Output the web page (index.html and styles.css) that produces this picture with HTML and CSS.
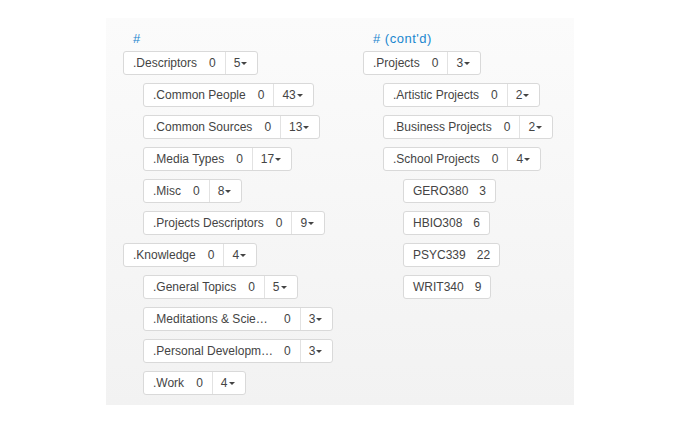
FILE: index.html
```html
<!DOCTYPE html>
<html>
<head>
<meta charset="utf-8">
<link rel="stylesheet" href="styles.css">
</head>
<body>
<div class="panel">
  <div class="col">
    <div class="head">#</div>
    <div class="row l0"><span class="btn"><span class="main"><span class="label">.Descriptors</span><span class="count">0</span></span><span class="more">5<i class="caret"></i></span></span></div>
    <div class="row l1"><span class="btn"><span class="main"><span class="label">.Common People</span><span class="count">0</span></span><span class="more">43<i class="caret"></i></span></span></div>
    <div class="row l1"><span class="btn"><span class="main"><span class="label">.Common Sources</span><span class="count">0</span></span><span class="more">13<i class="caret"></i></span></span></div>
    <div class="row l1"><span class="btn"><span class="main"><span class="label">.Media Types</span><span class="count">0</span></span><span class="more">17<i class="caret"></i></span></span></div>
    <div class="row l1"><span class="btn"><span class="main"><span class="label">.Misc</span><span class="count">0</span></span><span class="more">8<i class="caret"></i></span></span></div>
    <div class="row l1"><span class="btn"><span class="main"><span class="label">.Projects Descriptors</span><span class="count">0</span></span><span class="more">9<i class="caret"></i></span></span></div>
    <div class="row l0"><span class="btn"><span class="main"><span class="label">.Knowledge</span><span class="count">0</span></span><span class="more">4<i class="caret"></i></span></span></div>
    <div class="row l1"><span class="btn"><span class="main"><span class="label">.General Topics</span><span class="count">0</span></span><span class="more">5<i class="caret"></i></span></span></div>
    <div class="row l1"><span class="btn"><span class="main"><span class="label trunc">.Meditations &amp; Scie…</span><span class="count">0</span></span><span class="more">3<i class="caret"></i></span></span></div>
    <div class="row l1"><span class="btn"><span class="main"><span class="label trunc">.Personal Developm…</span><span class="count">0</span></span><span class="more">3<i class="caret"></i></span></span></div>
    <div class="row l1"><span class="btn"><span class="main"><span class="label">.Work</span><span class="count">0</span></span><span class="more">4<i class="caret"></i></span></span></div>
  </div>
  <div class="col">
    <div class="head"># (cont'd)</div>
    <div class="row l0"><span class="btn"><span class="main"><span class="label">.Projects</span><span class="count">0</span></span><span class="more">3<i class="caret"></i></span></span></div>
    <div class="row l1"><span class="btn"><span class="main"><span class="label">.Artistic Projects</span><span class="count">0</span></span><span class="more">2<i class="caret"></i></span></span></div>
    <div class="row l1"><span class="btn"><span class="main"><span class="label">.Business Projects</span><span class="count">0</span></span><span class="more">2<i class="caret"></i></span></span></div>
    <div class="row l1"><span class="btn"><span class="main"><span class="label">.School Projects</span><span class="count">0</span></span><span class="more">4<i class="caret"></i></span></span></div>
    <div class="row l2"><span class="btn"><span class="main leaf"><span class="label">GERO380</span><span class="count">3</span></span></span></div>
    <div class="row l2"><span class="btn"><span class="main leaf"><span class="label">HBIO308</span><span class="count">6</span></span></span></div>
    <div class="row l2"><span class="btn"><span class="main leaf"><span class="label">PSYC339</span><span class="count">22</span></span></span></div>
    <div class="row l2"><span class="btn"><span class="main leaf"><span class="label">WRIT340</span><span class="count">9</span></span></span></div>
  </div>
</div>
</body>
</html>
```
FILE: styles.css
```css
html, body {
  margin: 0;
  padding: 0;
  background: #ffffff;
}
body {
  font-family: "Liberation Sans", Arial, sans-serif;
  font-size: 12px;
  color: #444;
}
.panel {
  width: 468px;
  height: 387px;
  margin: 18px 0 0 106px;
  box-sizing: border-box;
  padding: 13px 0 0 17px;
  background: linear-gradient(#fbfbfb, #f2f2f2);
  display: flex;
}
.col {
  width: 240px;
  flex-shrink: 0;
  display: flex;
  flex-direction: column;
}
.head {
  color: #1b87cf;
  font-size: 13px;
  letter-spacing: 0.5px;
  height: 16px;
  line-height: 16px;
  padding-left: 10px;
  margin-bottom: 4px;
}
.row {
  display: flex;
  height: 24px;
  margin-bottom: 8px;
}
.l1 { padding-left: 20px; }
.l2 { padding-left: 40px; }
.btn {
  display: flex;
  align-items: stretch;
  background: #fff;
  border: 1px solid #d9d9d9;
  border-radius: 3px;
  box-sizing: border-box;
  height: 24px;
}
.main {
  display: flex;
  align-items: center;
  padding: 0 9px 0 9px;
}
.main.leaf {
  padding: 0 9px 0 9px;
}
.leaf .count { margin-left: 11px; }
.label {
  white-space: nowrap;
}
.trunc {
  width: 119px;
}
.count {
  margin-left: 12px;
}
.more {
  display: flex;
  align-items: center;
  border-left: 1px solid #e2e2e2;
  padding: 0 10px 0 8px;
}
.caret {
  display: inline-block;
  width: 0;
  height: 0;
  margin-left: 1px;
  margin-top: 1px;
  border-left: 3px solid transparent;
  border-right: 3px solid transparent;
  border-top: 3px solid #444;
}
```
